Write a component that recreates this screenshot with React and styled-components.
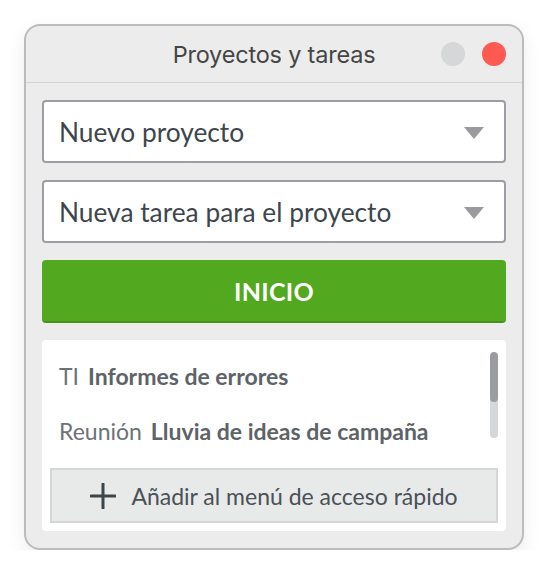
import React from "react";
import styled, { createGlobalStyle } from "styled-components";

const Global = createGlobalStyle`
  html, body { margin: 0; padding: 0; background: #ffffff; }
  body { font-family: "Lato", "Noto Sans", sans-serif; }
  * { box-sizing: border-box; }
`;

const Window = styled.div`
  margin: 24px 0 0 24px;
  width: 500px;
  height: 526px;
  border: 2px solid #bcbcbc;
  border-radius: 16px;
  background: #ebeceb;
  box-shadow: 0 6px 18px rgba(0, 0, 0, 0.08);
  display: flex;
  flex-direction: column;
  overflow: hidden;
`;

const TitleBar = styled.div`
  height: 57px;
  border-bottom: 1px solid #d5d5d5;
  display: flex;
  align-items: center;
  justify-content: center;
  position: relative;
  flex-shrink: 0;
`;

const Title = styled.div`
  font-family: "Inter", "Noto Sans", sans-serif;
  font-size: 23.5px;
  color: #454545;
  letter-spacing: -0.2px;
  margin-top: 1px;
`;

const Dots = styled.div`
  position: absolute;
  right: 16px;
  top: 16px;
  display: flex;
  gap: 17px;
`;

const Dot = styled.span`
  width: 24px;
  height: 24px;
  border-radius: 50%;
  background: ${(p) => p.$color};
`;

const Body = styled.div`
  flex: 1;
  padding: 17px 16px 17px 16px;
  display: flex;
  flex-direction: column;
  gap: 17px;
`;

const Select = styled.div`
  height: 63px;
  background: #fff;
  border: 2px solid #9b9fa3;
  border-radius: 4px;
  display: flex;
  align-items: center;
  justify-content: space-between;
  padding: 0 20px 0 15px;
  font-size: 26.3px;
  color: #3e464d;
`;

const Caret = styled.span`
  width: 0;
  height: 0;
  border-left: 10px solid transparent;
  border-right: 10px solid transparent;
  border-top: 12px solid #9a9b9f;
  margin-top: 2px;
`;

const StartButton = styled.button`
  height: 63px;
  border: none;
  border-bottom: 2px solid #47921e;
  border-radius: 4px;
  background: #52a81e;
  color: #fff;
  font-family: "Lato", sans-serif;
  font-weight: 700;
  font-size: 25px;
  letter-spacing: 0.3px;
  padding: 0;
`;

const ListPanel = styled.div`
  position: relative;
  flex: 1;
  background: #fff;
  border-radius: 4px;
  padding: 10px 8px 8px 8px;
  display: flex;
  flex-direction: column;
`;

const Row = styled.div`
  height: 55px;
  display: flex;
  align-items: center;
  padding-left: 9px;
  gap: 9px;
  font-size: 23px;
  white-space: nowrap;
  margin-top: -2px;
  margin-bottom: 2px;
`;

const Category = styled.span`
  color: #6d7276;
`;

const TaskName = styled.span`
  color: #5d6367;
  font-weight: 700;
`;

const Scrollbar = styled.div`
  position: absolute;
  right: 8px;
  top: 12px;
  width: 8px;
  height: 86px;
  border-radius: 4px;
  background: #d6d7d8;
  overflow: hidden;
`;

const Thumb = styled.div`
  height: 50px;
  border-radius: 4px;
  background: #9a9ca0;
`;

const AddButton = styled.button`
  margin-top: 8px;
  height: 55px;
  background: #e8e9e9;
  border: 2px solid #d5d6d6;
  border-radius: 0;
  display: flex;
  align-items: center;
  justify-content: center;
  gap: 15px;
  font-family: "Lato", sans-serif;
  font-size: 23px;
  color: #4a5157;
  padding: 0;
`;

export default function App() {
  return (
    <>
      <Global />
      <Window>
        <TitleBar>
          <Title>Proyectos y tareas</Title>
          <Dots>
            <Dot $color="#d6d7d9" />
            <Dot $color="#ff5a52" />
          </Dots>
        </TitleBar>
        <Body>
          <Select>
            Nuevo proyecto
            <Caret />
          </Select>
          <Select>
            Nueva tarea para el proyecto
            <Caret />
          </Select>
          <StartButton>INICIO</StartButton>
          <ListPanel>
            <Row>
              <Category>TI</Category>
              <TaskName>Informes de errores</TaskName>
            </Row>
            <Row>
              <Category>Reunión</Category>
              <TaskName>Lluvia de ideas de campaña</TaskName>
            </Row>
            <AddButton>
              <svg width="26" height="26" viewBox="0 0 26 26">
                <path d="M13 1v24M1 13h24" stroke="#3d454c" strokeWidth="3" strokeLinecap="round" />
              </svg>
              Añadir al menú de acceso rápido
            </AddButton>
            <Scrollbar>
              <Thumb />
            </Scrollbar>
          </ListPanel>
        </Body>
      </Window>
    </>
  );
}
